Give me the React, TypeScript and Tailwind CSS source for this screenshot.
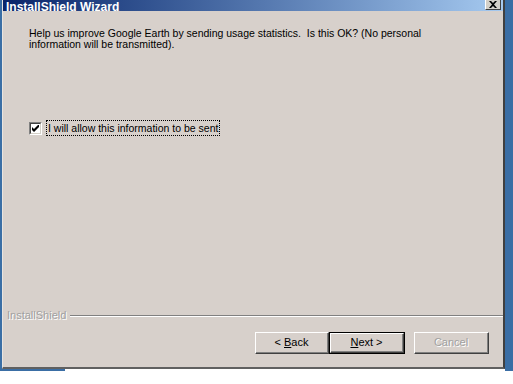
import React from "react";

const font = { fontFamily: '"Liberation Sans", Arial, sans-serif' };

function Btn({ children, isDefault, disabled }: { children: React.ReactNode; isDefault?: boolean; disabled?: boolean }) {
  const inner = (
    <div className="flex h-full w-full border-t border-l border-t-white border-l-white border-r border-b border-r-[#404040] border-b-[#404040]">
      <div className="flex h-full w-full items-center justify-center border-r border-b border-r-[#808080] border-b-[#808080] text-[11px] leading-none">
        {children}
      </div>
    </div>
  );
  if (isDefault) {
    return <div className="h-[22px] w-[76px] border border-black">{inner}</div>;
  }
  return <div className={"h-[22px] " + (disabled ? "w-[75px]" : "w-[74px]")}>{inner}</div>;
}

export default function App() {
  return (
    <div className="w-[513px] h-[384px] bg-white overflow-hidden text-black" style={font}>
      <div className="flex h-[369px]">
        <div className="w-[2px] bg-[#3a6ea5]" />
        <div className="flex w-[503px] flex-col border-l border-l-[#e8e4e0] border-r-2 border-r-[#404040] border-b-2 border-b-[#606060] bg-[#d7d0cb]">
          {/* title bar */}
          <div className="relative flex h-[11px] items-end bg-gradient-to-r from-[#0a246a] to-[#a6caf0] overflow-hidden">
            <div className="pl-[3px] text-[12px] font-bold leading-[12px] text-white translate-y-[2px] whitespace-nowrap">
              InstallShield Wizard
            </div>
            <div className="absolute right-[2px] top-0 flex h-[10px] w-[16px] items-end justify-center bg-[#d4d0c8] border-r border-b border-r-[#404040] border-b-[#404040] border-l border-l-white">
              <svg width="8" height="7" viewBox="0 0 8 7" className="mb-[1px]">
                <path d="M0 0h2l2 2 2-2h2L5 3.5 8 7H6L4 5 2 7H0l3-3.5z" fill="black" />
              </svg>
            </div>
          </div>
          {/* content */}
          <div className="flex flex-1 flex-col">
            <div className="pl-[26px] pt-[17px] text-[10.5px] leading-[11px]">
              <p>Help us improve Google Earth by sending usage statistics.&nbsp; Is this OK? (No personal</p>
              <p>information will be transmitted).</p>
            </div>
            <div className="mt-[70px] flex items-center pl-[26px]">
              <div className="flex h-[13px] w-[13px] items-center justify-center border-t border-l border-t-[#808080] border-l-[#808080] border-r border-b border-r-white border-b-white">
                <div className="flex h-[11px] w-[11px] items-center justify-center border-t border-l border-t-[#404040] border-l-[#404040] border-r border-b border-r-[#d4d0c8] border-b-[#d4d0c8] bg-white">
                  <svg width="7" height="7" viewBox="0 0 7 7">
                    <path d="M0 2v3l2 2 5-5V-1L2 4z" fill="black" />
                  </svg>
                </div>
              </div>
              <div className="ml-[4px] border border-dotted border-black px-[1px] text-[10.5px] leading-[14px]">
                I will allow this information to be sent
              </div>
            </div>
            <div className="flex-1" />
            <div className="flex items-center pl-[4px] pr-0">
              <span className="text-[11px] leading-[11px] text-[#a0a0a0]" style={{ textShadow: "1px 1px 0 #ffffff" }}>
                InstallShield
              </span>
              <div className="ml-[4px] flex-1 flex flex-col">
                <div className="h-px bg-[#808080]" />
                <div className="h-px bg-white" />
              </div>
            </div>
            <div className="mt-[11px] mb-[13px] flex justify-end pr-[14px]">
              <Btn>
                <span>&lt; <u>B</u>ack</span>
              </Btn>
              <Btn isDefault>
                <span><u>N</u>ext &gt;</span>
              </Btn>
              <div className="w-[9px]" />
              <Btn disabled>
                <span className="text-[#a0a0a0]" style={{ textShadow: "1px 1px 0 #ffffff" }}>Cancel</span>
              </Btn>
            </div>
          </div>
        </div>
        <div className="flex-1 bg-[#3a6ea5]" />
      </div>
      <div className="flex h-[2px]">
        <div className="w-[65px] bg-[#3a6ea5]" />
        <div className="flex-1" />
        <div className="w-[8px] bg-[#3a6ea5]" />
      </div>
    </div>
  );
}
